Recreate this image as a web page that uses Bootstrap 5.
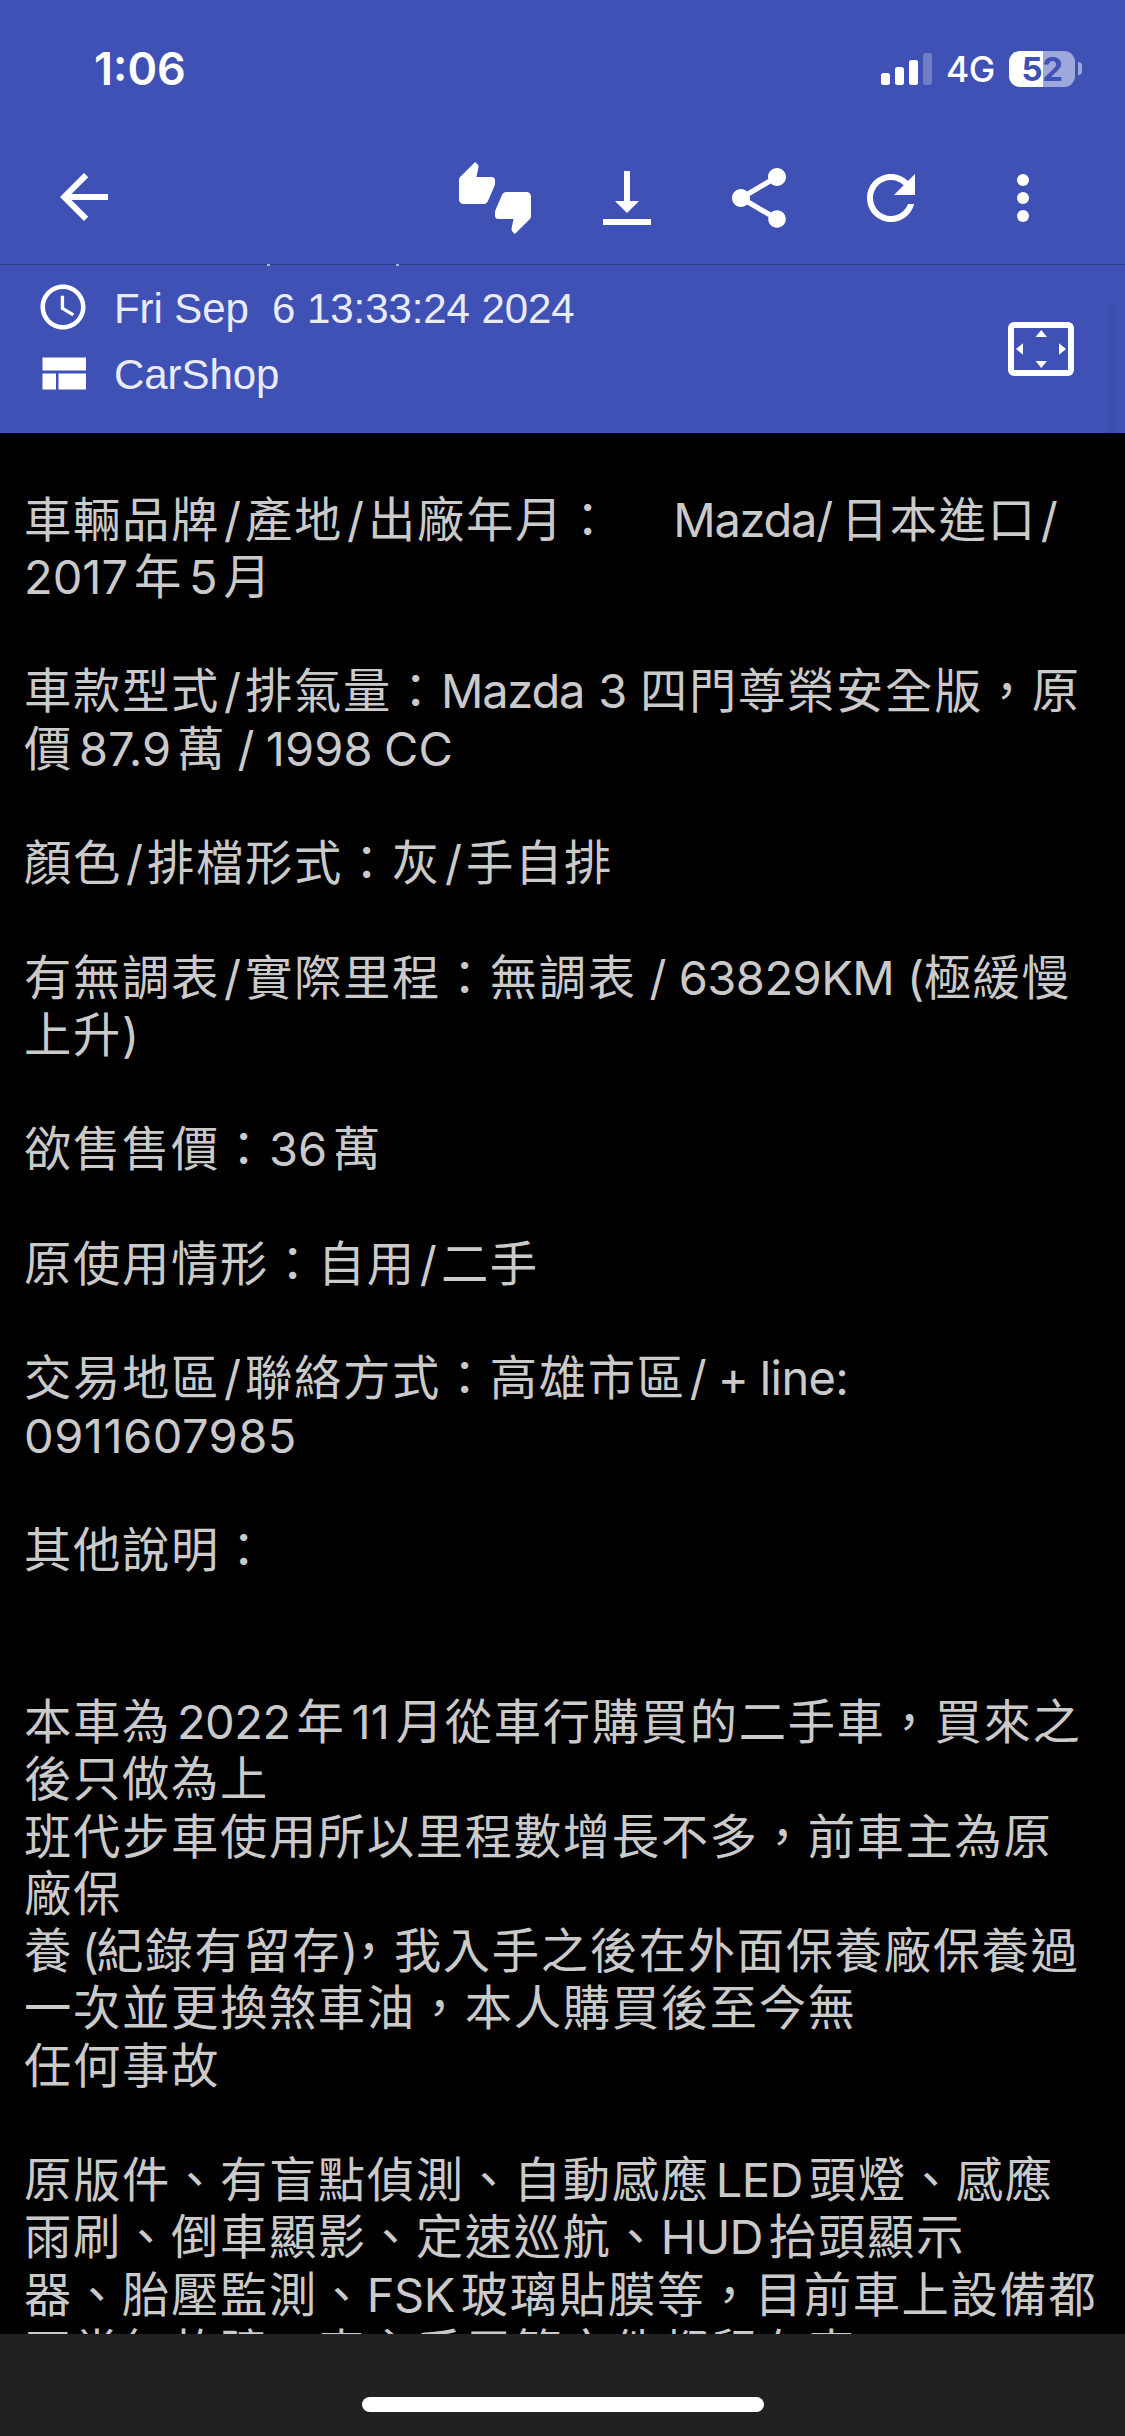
<!DOCTYPE html>
<html lang="zh-Hant">
<head>
<meta charset="utf-8">
<meta name="viewport" content="width=device-width, initial-scale=1">
<title>CarShop</title>
<link rel="stylesheet" href="https://cdn.jsdelivr.net/npm/bootstrap@5.3.0/dist/css/bootstrap.min.css">
<style>
body{background:#000;font-family:Inter,"Noto Sans CJK TC",sans-serif}
.screen{width:1125px;height:2436px;background:#000}
.blue{background:#3f51b5}
.status{height:132px;padding:5px 43px 0 94px}
.clock-text{font-size:45px;font-weight:600;letter-spacing:0;line-height:1}
.net{font-size:35.5px;font-weight:450;line-height:1;margin:2px 14px 0 13px;letter-spacing:-.4px}
.batt{width:66px;height:36px;border-radius:11px;background:linear-gradient(90deg,#fff 34px,#9fa8da 34px);color:#3f51b5;font-size:33px;font-weight:700;line-height:36px;letter-spacing:-.5px}
.nub{width:4px;height:13px;border-radius:0 6px 6px 0;background:#9fa8da;margin-left:3px}
.tools{height:132px;padding:0 66px 0 48px}
.tools svg{width:72px;height:72px;display:block}
.tools .group{gap:60px}
.info{height:169px;border-top:1px solid #2c3a8c;font-family:"Liberation Sans",sans-serif;font-size:42px;color:#e9ebf7;padding:9px 51px 0 36px}
.info .entry{height:66px;white-space:pre;line-height:66px;gap:24px}
.info .entry svg{width:54px;height:54px}
.info .entry span{padding-top:4px;letter-spacing:-.07px}
.info .expand{margin-top:48px}
.speck{width:3px;height:2px;background:#aab1dd;top:264px}
.thumb{width:8px;height:132px;left:1107px;top:301px;border-radius:4px 4px 0 0;background:#3d4fb1}
.post{height:1901px;padding:57.5px 0 0 24px;font-size:47.3px;line-height:57.27px;color:#cacaca;white-space:pre;letter-spacing:1.68px;font-weight:400}
.post b{font-weight:400;font-size:47px;letter-spacing:0;margin:0 6px}
.post i{font-style:normal;letter-spacing:0;margin:0 4px}
.post .nl{margin-left:0}
.post .nr{margin-right:0}
.post .gap{margin-left:11.5px}
.post .word{letter-spacing:-1.3px}
.post .lift{margin-right:9px}
.post .trio{letter-spacing:-1.2px;word-spacing:2px}
.post .snug{letter-spacing:-.5px}
.post .spec{letter-spacing:.1px;word-spacing:-2px}
.post .line-id{margin-left:4px;letter-spacing:-.6px;word-spacing:-1px}
.post .wide{letter-spacing:.5px}
.post .paren{letter-spacing:-2.5px;word-spacing:-2px}
.post .pull{margin-left:-11px}
.dock{height:102px;background:#212121;padding-top:63px}
.pill{width:402px;height:15px;border-radius:8px;background:#fff}
</style>
</head>
<body>
<div class="screen position-relative overflow-hidden d-flex flex-column">
<header class="blue text-white flex-shrink-0">
<div class="status d-flex align-items-center justify-content-between">
<span class="clock-text">1:06</span>
<div class="d-flex align-items-center">
<svg width="52" height="34" viewBox="0 0 52 34" fill="#fff"><rect x="0" y="21" width="9" height="12" rx="2.5"/><rect x="14" y="15" width="9" height="18" rx="2.5"/><rect x="28" y="8" width="9" height="25" rx="2.5"/><rect x="42" y="1" width="9" height="32" rx="2.5" opacity=".25"/></svg>
<span class="net">4G</span>
<span class="batt text-center">52</span><span class="nub"></span>
</div>
</div>
<nav class="tools d-flex align-items-center justify-content-between">
<svg viewBox="0 0 24 24" fill="#fff"><path d="M20 10.7H7.83l5.59-5.59L12 3.7l-8 8 8 8 1.41-1.41L7.83 12.7H20z"/></svg>
<div class="group d-flex">
<svg viewBox="0 0 24 24" fill="#fff"><path d="M12 6c0-.55-.45-1-1-1H5.82l.66-3.18.02-.23c0-.31-.13-.59-.33-.8L5.38 0 .44 4.94C.17 5.21 0 5.59 0 6v6.5c0 .83.67 1.5 1.5 1.5h6.75c.62 0 1.15-.38 1.38-.91l2.26-5.29c.07-.17.11-.36.11-.55V6zm10.5 4h-6.75c-.62 0-1.15.38-1.38.91l-2.26 5.29c-.07.17-.11.36-.11.55V18c0 .55.45 1 1 1h5.18l-.66 3.18-.02.24c0 .31.13.59.33.8l.79.78 4.94-4.94c.27-.27.44-.65.44-1.06v-6.5c0-.83-.67-1.5-1.5-1.5z"/></svg>
<svg viewBox="0 0 24 24" fill="#fff"><path d="M11 3h2v10h3l-4 4-4-4h3zM4 19h16v2H4z"/></svg>
<svg viewBox="0 0 24 24" fill="#fff"><path d="M18 16.08c-.76 0-1.44.3-1.96.77L8.91 12.7c.05-.23.09-.46.09-.7s-.04-.47-.09-.7l7.05-4.11c.54.5 1.25.81 2.04.81 1.66 0 3-1.34 3-3s-1.34-3-3-3-3 1.34-3 3c0 .24.04.47.09.7L8.04 9.81C7.5 9.31 6.79 9 6 9c-1.66 0-3 1.34-3 3s1.34 3 3 3c.79 0 1.5-.31 2.04-.81l7.12 4.16c-.05.21-.08.43-.08.65 0 1.61 1.31 2.92 2.92 2.92s2.92-1.31 2.92-2.92-1.31-2.92-2.92-2.92z"/></svg>
<svg viewBox="0 0 24 24" fill="#fff"><path d="M17.65 6.35C16.2 4.9 14.21 4 12 4c-4.42 0-7.99 3.58-7.99 8s3.57 8 7.99 8c3.73 0 6.84-2.55 7.73-6h-2.08c-.82 2.33-3.04 4-5.65 4-3.31 0-6-2.69-6-6s2.69-6 6-6c1.66 0 3.14.69 4.22 1.78L13 11h7V4l-2.35 2.35z"/></svg>
<svg viewBox="0 0 24 24" fill="#fff"><circle cx="12" cy="6" r="2"/><circle cx="12" cy="12" r="2"/><circle cx="12" cy="18" r="2"/></svg>
</div>
</nav>
<div class="info d-flex justify-content-between align-items-start">
<div>
<div class="entry d-flex align-items-center"><svg viewBox="0 0 24 24" fill="#fff"><path d="M11.99 2C6.47 2 2 6.48 2 12s4.47 10 9.99 10C17.52 22 22 17.52 22 12S17.52 2 11.99 2zM12 20c-4.42 0-8-3.58-8-8s3.58-8 8-8 8 3.58 8 8-3.58 8-8 8zm.5-13H11v6l5.25 3.15.75-1.23-4.5-2.67z"/></svg><span>Fri Sep  6 13:33:24 2024</span></div>
<div class="entry d-flex align-items-center"><svg viewBox="0 0 54 54" fill="#fff"><path d="M6.500 11.500h43.500v13H6.500zM6.500 27.500h13.500v16H6.500zM22.500 27.500h27.500v16H22.500z"/></svg><span>CarShop</span></div>
</div>
<svg class="expand" width="66" height="54" viewBox="0 0 66 54" fill="#fff"><rect x="3" y="3" width="60" height="48" rx="3" fill="none" stroke="#fff" stroke-width="6"/><path d="M27.500 15l5.750-7 5.750 7zM27.500 39l5.750 7 5.750-7zM15 21.250l-7 5.750 7 5.750zM51 21.250l7 5.750-7 5.750z"/></svg>
</div>
</header>
<main class="post overflow-hidden flex-shrink-0">車輛品牌<i>/</i>產地<i>/</i>出廠年月：　<b class="gap word lift">Mazda/</b>日本進口<i>/</i>
<b class="nl">2017</b>年<b>5</b>月

車款型式<i>/</i>排氣量：<b class="nl nr trio">Mazda 3 </b>四門尊榮安全版，原
價<b>87.9</b>萬<b class="nl spec"> / 1998 CC</b>

顏色<i>/</i>排檔形式：灰<i>/</i>手自排

有無調表<i>/</i>實際里程：無調表<b class="nl nr snug"> / 63829KM (</b>極緩慢
上升<b class="nl">)</b>

欲售售價：<b class="nl">36</b>萬

原使用情形：自用<i>/</i>二手

交易地區<i>/</i>聯絡方式：高雄市區<b class="line-id">/ + line:</b>
<b class="nl wide">0911607985</b>

其他說明：


本車為<b class="snug">2022</b>年<b>11</b>月從車行購買的二手車，買來之
後只做為上
班代步車使用所以里程數增長不多，前車主為原
廠保
養<b class="nl nr paren"> (</b>紀錄有留存<b class="nl nr paren">)</b><span class="pull">，</span>我入手之後在外面保養廠保養過
一次並更換煞車油，本人購買後至今無
任何事故

原版件、有盲點偵測、自動感應<b class="snug">LED</b>頭燈、感應
雨刷、倒車顯影、定速巡航、<b class="nl snug">HUD</b>抬頭顯示
器、胎壓監測、<b class="nl snug">FSK</b>玻璃貼膜等，目前車上設備都
正常無故障，車主手冊等文件都留在車</main>
<footer class="dock flex-shrink-0 d-flex justify-content-center"><div class="pill"></div></footer>
<span class="speck position-absolute" style="left:267px"></span>
<span class="speck position-absolute" style="left:396px"></span>
<span class="thumb position-absolute"></span>
</div>
<script src="https://cdn.jsdelivr.net/npm/bootstrap@5.3.0/dist/js/bootstrap.bundle.min.js"></script>
</body>
</html>
